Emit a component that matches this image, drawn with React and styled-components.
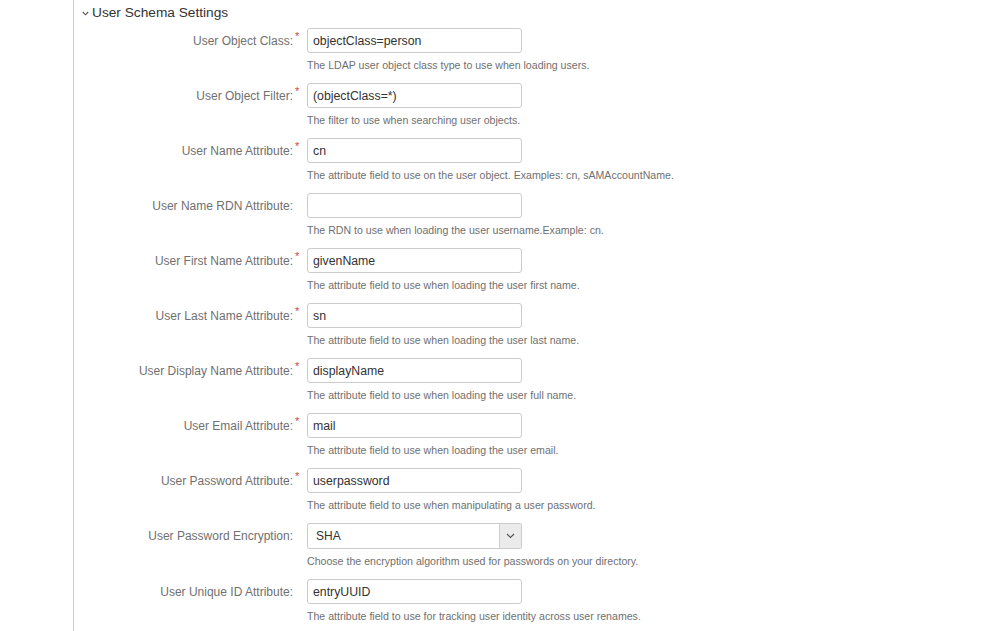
import React from "react";
import styled, { createGlobalStyle } from "styled-components";

const Global = createGlobalStyle`
  html, body { margin: 0; padding: 0; background: #fff; }
  body { font-family: Arial, "Liberation Sans", Helvetica, sans-serif; color: #333; }
  * { box-sizing: border-box; }
`;

const Page = styled.div`
  margin-left: 73px;
  border-left: 1px solid #cccccc;
  min-height: 100vh;
  padding-left: 8px;
`;

const Heading = styled.h3`
  margin: 0;
  padding-top: 1px;
  display: flex;
  align-items: center;
  gap: 3px;
  height: 25px;
  font-size: 13.7px;
  font-weight: normal;
  color: #333;
  line-height: 24px;
`;

const Chevron = styled.svg`
  width: 7px;
  height: 5px;
  margin-top: 1px;
`;

const FieldList = styled.div`
  padding-top: 3px;
  display: flex;
  flex-direction: column;
`;

const Field = styled.div`
  display: grid;
  grid-template-columns: 212px 215px;
  column-gap: 13px;
  row-gap: 6px;
  margin-bottom: 11px;
`;

const Label = styled.label`
  grid-column: 1;
  display: flex;
  justify-content: flex-end;
  align-items: center;
  height: ${(p) => (p.$tall ? "26px" : "25px")};
  font-size: 12px;
  color: #707070;
  white-space: nowrap;
`;

const LabelText = styled.span`
  position: relative;
  margin-right: 1px;
`;

const Required = styled.span`
  position: absolute;
  left: 100%;
  top: -3px;
  margin-left: 2px;
  font-size: 11px;
  line-height: 11px;
  color: #d04437;
`;

const Input = styled.input`
  grid-column: 2;
  height: 25px;
  width: 215px;
  border: 1px solid #cccccc;
  border-radius: 3px;
  padding: 0 5px;
  font-family: Arial, "Liberation Sans", Helvetica, sans-serif;
  font-size: 12.3px;
  color: #333;
  background: #fff;
  outline: none;
`;

const SelectBox = styled.div`
  grid-column: 2;
  height: 26px;
  width: 215px;
  border: 1px solid #cccccc;
  border-radius: 2px;
  display: flex;
  align-items: stretch;
  background: #fff;
`;

const SelectValue = styled.div`
  flex: 1;
  display: flex;
  align-items: center;
  padding-left: 8px;
  font-size: 12px;
  color: #333;
`;

const SelectButton = styled.div`
  width: 22px;
  border-left: 1px solid #cccccc;
  background: #ebebeb;
  display: flex;
  align-items: center;
  justify-content: center;
`;

const Description = styled.div`
  grid-column: 2;
  font-size: 10.6px;
  line-height: 13px;
  color: #707070;
  white-space: nowrap;
`;

const fields = [
  { label: "User Object Class:", value: "objectClass=person", req: true, desc: "The LDAP user object class type to use when loading users." },
  { label: "User Object Filter:", value: "(objectClass=*)", req: true, desc: "The filter to use when searching user objects." },
  { label: "User Name Attribute:", value: "cn", req: true, desc: "The attribute field to use on the user object. Examples: cn, sAMAccountName." },
  { label: "User Name RDN Attribute:", value: "", req: false, desc: "The RDN to use when loading the user username.Example: cn." },
  { label: "User First Name Attribute:", value: "givenName", req: true, desc: "The attribute field to use when loading the user first name." },
  { label: "User Last Name Attribute:", value: "sn", req: true, desc: "The attribute field to use when loading the user last name." },
  { label: "User Display Name Attribute:", value: "displayName", req: true, desc: "The attribute field to use when loading the user full name." },
  { label: "User Email Attribute:", value: "mail", req: true, desc: "The attribute field to use when loading the user email." },
  { label: "User Password Attribute:", value: "userpassword", req: true, desc: "The attribute field to use when manipulating a user password." },
  { label: "User Password Encryption:", value: "SHA", select: true, req: false, desc: "Choose the encryption algorithm used for passwords on your directory." },
  { label: "User Unique ID Attribute:", value: "entryUUID", req: false, desc: "The attribute field to use for tracking user identity across user renames." },
];

export default function App() {
  return (
    <>
      <Global />
      <Page>
        <Heading>
          <Chevron viewBox="0 0 7 5">
            <path d="M0.8 1 L3.5 3.8 L6.2 1" fill="none" stroke="#555" strokeWidth="1.1" />
          </Chevron>
          User Schema Settings
        </Heading>
        <FieldList>
          {fields.map((f) => (
            <Field key={f.label}>
              <Label $tall={f.select}>
                <LabelText>
                  {f.label}
                  {f.req && <Required>*</Required>}
                </LabelText>
              </Label>
              {f.select ? (
                <SelectBox>
                  <SelectValue>{f.value}</SelectValue>
                  <SelectButton>
                    <svg width="9" height="6" viewBox="0 0 9 6">
                      <path d="M1 1 L4.5 4.5 L8 1" fill="none" stroke="#555" strokeWidth="1.2" />
                    </svg>
                  </SelectButton>
                </SelectBox>
              ) : (
                <Input defaultValue={f.value} readOnly />
              )}
              <Description>{f.desc}</Description>
            </Field>
          ))}
        </FieldList>
      </Page>
    </>
  );
}
